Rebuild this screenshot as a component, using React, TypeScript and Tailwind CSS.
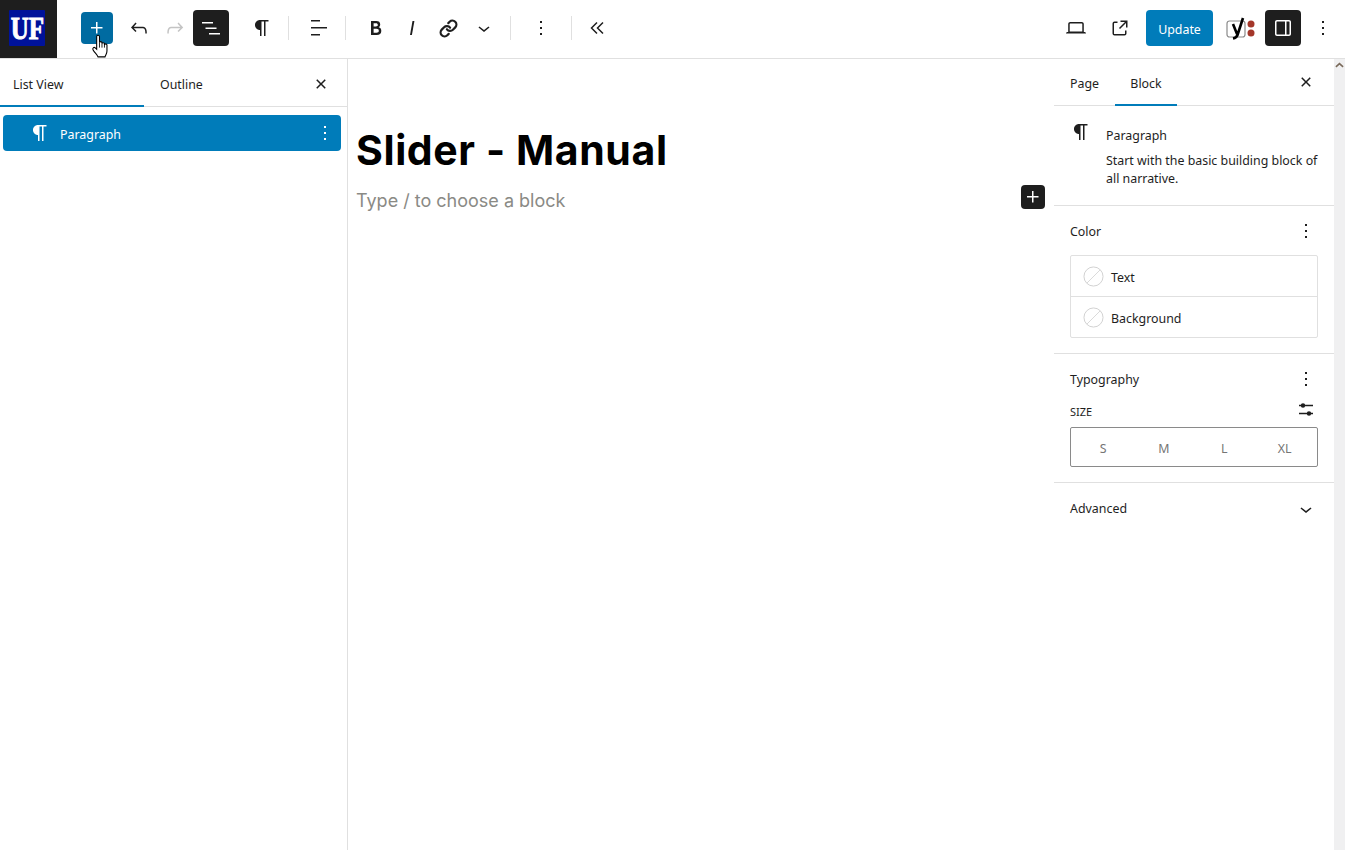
import type { ReactNode } from "react";
import { Link } from "lucide-react";

const P = {
  plus: "M11 12.5V17.5H12.5V12.5H17.5V11H12.5V6H11V11H6V12.5H11Z",
  undo: "M18.3 11.7c-.6-.6-1.4-.9-2.3-.9H6.7l2.9-3.3-1.1-1-4.5 5L8.5 16l1-1-2.7-2.7H16c.5 0 .9.2 1.3.5 1 1 1 3.4 1 4.5v.3h1.5v-.2c0-1.5 0-4.3-1.5-5.7z",
  redo: "M15.6 6.5l-1.1 1 2.9 3.3H8c-.9 0-1.7.3-2.3.9-1.4 1.5-1.4 4.2-1.4 5.6v.2h1.5v-.3c0-1.1 0-3.5 1-4.5.3-.3.7-.5 1.3-.5h9.2L14.5 15l1.1 1.1 4.6-4.6-4.6-5z",
  list: "M3 6h11v1.5H3V6Zm3.5 5.5h11V13h-11v-1.5ZM21 17H10v1.5h11V17Z",
  para: "m9.99609 14v-.2251l.00391.0001v6.225h1.5v-14.5h2.5v14.5h1.5v-14.5h3v-1.5h-8.50391c-2.76142 0-5 2.23858-5 5 0 2.7614 2.23858 5 5 5z",
  align: "M13 5.5H4V4h9v1.5Zm7 7H4V11h16v1.5Zm-7 7H4V18h9v1.5Z",
  bold: "M14.7 11.3c1-.6 1.5-1.6 1.5-3 0-2.3-1.3-3.4-4-3.4H7v14h5.8c1.4 0 2.5-.3 3.3-1 .8-.7 1.2-1.7 1.2-2.9.1-1.9-.8-3.1-2.6-3.7zm-5.1-4h2.3c.6 0 1.1.1 1.4.4.3.3.5.7.5 1.2s-.2 1-.5 1.2c-.3.3-.8.4-1.4.4H9.6V7.3zm4.6 9c-.4.3-1 .4-1.7.4H9.6v-3.9h2.9c.7 0 1.3.2 1.7.5.4.3.6.8.6 1.5s-.2 1.2-.6 1.5z",
  italic: "M12.5 5L10 19h1.9l2.5-14z",
  chevron: "M17.5 11.6L12 16l-5.5-4.4.9-1.2L12 14l4.5-3.6 1 1.2z",
  more: "M13 19h-2v-2h2v2zm0-6h-2v-2h2v2zm0-6h-2V5h2v2z",
  close: "M12 13.06l3.712 3.713 1.061-1.06L13.061 12l3.712-3.712-1.06-1.06L12 10.938 8.288 7.227l-1.061 1.06L10.939 12l-3.712 3.712 1.06 1.061L12 13.061z",
  external: "M19.5 4.5h-7V6h4.44l-5.97 5.97 1.06 1.06L18 7.06v4.44h1.5v-7Zm-13 1a2 2 0 0 0-2 2v10a2 2 0 0 0 2 2h10a2 2 0 0 0 2-2v-3H17v3a.5.5 0 0 1-.5.5h-10a.5.5 0 0 1-.5-.5v-10a.5.5 0 0 1 .5-.5h3V5.5h-3Z",
  drawer: "M18 4H6c-1.1 0-2 .9-2 2v12c0 1.1.9 2 2 2h12c1.1 0 2-.9 2-2V6c0-1.1-.9-2-2-2zm-4 14.5H6c-.3 0-.5-.2-.5-.5V6c0-.3.2-.5.5-.5h8v13zm4.5-.5c0 .3-.2.5-.5.5h-2.5v-13H18c.3 0 .5.2.5.5v12z",
  laptop: "M20.5 16h-.7V8c0-1.1-.9-2-2-2H6.2c-1.1 0-2 .9-2 2v8h-.7c-.8 0-1.5.7-1.5 1.5h20c0-.8-.7-1.5-1.5-1.5zM5.7 8c0-.3.2-.5.5-.5h11.6c.3 0 .5.2.5.5v7.6H5.7V8z",
};

function Icon({ d, className = "" }: { d: string; className?: string }) {
  return (
    <svg viewBox="0 0 24 24" className={`w-6 h-6 shrink-0 fill-current ${className}`}>
      <path d={d} />
    </svg>
  );
}

function Btn({ children, className = "" }: { children: ReactNode; className?: string }) {
  return (
    <div className={`w-9 h-9 shrink-0 flex items-center justify-center rounded-sm text-[#1e1e1e] ${className}`}>
      {children}
    </div>
  );
}

function Sep({ className = "" }: { className?: string }) {
  return <div className={`w-px h-6 shrink-0 bg-[#e0e0e0] ${className}`} />;
}

function HandCursor() {
  return (
    <svg viewBox="0 0 18 24" className="absolute left-[91px] top-[33px] w-[20px] h-[26px]">
      <path
        d="M5 12V3.2C5 1.6 7.6 1.6 7.6 3.2V9c0-1.4 2.3-1.4 2.3 0v1c0-1.4 2.3-1.4 2.3 0v1c0-1.3 2.3-1.3 2.3 0v5.5c0 2.6-1.2 3.6-1.8 5.5H6.2C5.2 19.6 3.4 18.6 1.7 15.6c-.9-1.6.7-3 2-1.8L5 15Z"
        fill="#fff"
        stroke="#000"
        strokeWidth="1"
      />
      <path d="M7.6 9v4.5M9.9 10v3.5M12.2 11v2.5" stroke="#000" strokeWidth="0.8" />
    </svg>
  );
}

function TopBar() {
  return (
    <header className="relative h-[59px] shrink-0 flex items-center pb-[2px] bg-white border-b border-[#e0e0e0]">
      <div className="w-[57px] h-[58px] shrink-0 self-start bg-[#1e1e1e] pl-[9px] pt-[10px]">
        <div className="w-9 h-9 bg-[#00129a] rounded-[1px] flex items-center justify-center overflow-hidden">
          <span className="font-['Liberation_Serif',serif] font-bold text-[32px] leading-none text-white scale-x-[0.78] [-webkit-text-stroke:1px_white]">
            UF
          </span>
        </div>
      </div>
      <div className="ml-6 w-8 h-8 shrink-0 rounded-sm bg-[#006ba1] text-white flex items-center justify-center">
        <Icon d={P.plus} />
      </div>
      <Btn className="ml-2">
        <Icon d={P.undo} />
      </Btn>
      <Btn className="text-[#c4c4c4]">
        <Icon d={P.redo} />
      </Btn>
      <Btn className="bg-[#1e1e1e] text-white">
        <Icon d={P.list} />
      </Btn>
      <Btn className="ml-[14px]">
        <Icon d={P.para} className="ml-[2px]" />
      </Btn>
      <Sep className="ml-[9px]" />
      <Btn className="ml-[12px]">
        <Icon d={P.align} />
      </Btn>
      <Sep className="ml-[8px]" />
      <Btn className="ml-[12px]">
        <Icon d={P.bold} />
      </Btn>
      <Btn>
        <Icon d={P.italic} />
      </Btn>
      <Btn>
        <Link className="w-[19px] h-[19px]" strokeWidth={2.8} />
      </Btn>
      <Btn>
        <Icon d={P.chevron} />
      </Btn>
      <Sep className="ml-[8px]" />
      <Btn className="ml-[12px]">
        <Icon d={P.more} />
      </Btn>
      <Sep className="ml-[12px]" />
      <Btn className="ml-[7px]">
        <svg viewBox="0 0 24 24" className="w-6 h-6 fill-none stroke-current" strokeWidth="1.5">
          <path d="M12 6.500 6.500 12l5.500 5.500M18 6.500 12.500 12l5.500 5.500" />
        </svg>
      </Btn>
      <div className="ml-auto flex items-center">
        <Btn>
          <Icon d={P.laptop} />
        </Btn>
        <Btn className="ml-2">
          <Icon d={P.external} />
        </Btn>
        <div className="ml-2 w-[67px] h-9 pt-1 rounded-sm bg-[#007cba] text-white flex items-center justify-center">
          Update
        </div>
        <div className="ml-[13px] w-[32px] h-9 flex items-center justify-center">
          <svg viewBox="0 0 32 24" className="w-[32px] h-6">
            <rect x="1" y="5" width="18" height="16" rx="2.500" fill="none" stroke="#8a8a8a" strokeWidth="1.200" />
            <path d="M7 8 11 18M17 2 11.500 19c-.6 1.800-2 3-4.500 3.500" fill="none" stroke="#000" strokeWidth="2.600" />
            <circle cx="25" cy="8" r="3.500" fill="#a4372a" />
            <circle cx="25" cy="17" r="3.500" fill="#a4372a" />
          </svg>
        </div>
        <Btn className="ml-[7px] bg-[#1e1e1e] text-white">
          <Icon d={P.drawer} />
        </Btn>
        <Btn className="ml-1 mr-1">
          <Icon d={P.more} />
        </Btn>
      </div>
      <HandCursor />
    </header>
  );
}

function ListPanel() {
  return (
    <aside className="w-[348px] shrink-0 border-r border-[#e0e0e0] bg-white">
      <div className="relative h-[48px] flex border-b border-[#e0e0e0]">
        <div className="w-[144px] h-[48px] pl-[13px] pt-[7px] flex items-center border-b-2 border-[#007cba] text-[#1e1e1e]">List View</div>
        <div className="pl-4 pt-[5px] flex items-center text-[#1e1e1e]">Outline</div>
        <Icon d={P.close} className="absolute left-[309px] top-[13px] text-[#1e1e1e]" />
      </div>
      <div className="mx-[3px] mt-2 mr-[6px] h-9 rounded-sm bg-[#007cba] text-white flex items-center">
        <Icon d={P.para} className="ml-[25px]" />
        <span className="ml-2 pt-1">Paragraph</span>
        <Icon d={P.more} className="ml-auto mr-1" />
      </div>
    </aside>
  );
}

function Editor() {
  return (
    <main className="relative flex-1 bg-white pl-2 pt-[66px]">
      <h1 className="font-['Inter',sans-serif] font-bold text-[41px] leading-[50px] tracking-[0.6px] text-black">Slider - Manual</h1>
      <p className="mt-[11px] font-['Inter',sans-serif] text-[18px] leading-[30px] text-[#8a8a85]">Type / to choose a block</p>
      <div className="absolute left-[673px] top-[126px] w-6 h-6 rounded-sm bg-[#1e1e1e] text-white flex items-center justify-center">
        <Icon d={P.plus} />
      </div>
    </main>
  );
}

function NoColor() {
  return (
    <svg viewBox="0 0 22 22" className="w-[21px] h-[21px] shrink-0">
      <circle cx="11" cy="11" r="10" fill="#fff" stroke="#d0d0d0" />
      <path d="M4 18 18 4" stroke="#d8d8d8" />
    </svg>
  );
}

function Sidebar() {
  return (
    <aside className="w-[281px] shrink-0 border-l border-[#e0e0e0] bg-white text-[#1e1e1e] -ml-px">
      <div className="relative h-[47px] flex border-b border-[#e0e0e0]">
        <div className="pl-4 w-[61px] h-[47px] pt-1 flex items-center">Page</div>
        <div className="w-[62px] h-[47px] pt-[5px] flex items-center justify-center border-b-2 border-[#007cba]">Block</div>
        <Icon d={P.close} className="absolute left-[240px] top-[11px]" />
      </div>
      <section className="h-[100px] flex border-b border-[#e0e0e0] pl-4 pt-[16px]">
        <Icon d={P.para} className="-ml-[1px] -mt-[2px]" />
        <div className="ml-[13px] w-[214px] pt-1">
          <div className="leading-[20px]">Paragraph</div>
          <p className="mt-[6px] leading-[18px]">Start with the basic building block of all narrative.</p>
        </div>
      </section>
      <section className="h-[148px] border-b border-[#e0e0e0] px-4 pt-[13px]">
        <div className="flex items-center justify-between h-6">
          <span className="pt-[3px]">Color</span>
          <Icon d={P.more} />
        </div>
        <div className="mt-[12px] w-[248px] border border-[#e0e0e0] rounded-[2px]">
          <div className="h-[41px] flex items-center pl-3 gap-[7px] border-b border-[#e0e0e0]">
            <NoColor />
            <span className="pt-1">Text</span>
          </div>
          <div className="h-[40px] flex items-center pl-3 gap-[7px]">
            <NoColor />
            <span className="pt-1">Background</span>
          </div>
        </div>
      </section>
      <section className="h-[129px] border-b border-[#e0e0e0] px-4 pt-[13px]">
        <div className="flex items-center justify-between h-6">
          <span className="pt-[3px]">Typography</span>
          <Icon d={P.more} />
        </div>
        <div className="mt-[11px] h-5 flex items-center justify-between">
          <span className="text-[11px] uppercase pt-[1px]">Size</span>
          <svg viewBox="0 0 24 24" className="w-6 h-6 -mt-[4px]">
            <path d="M5 7.500h14M5 15.500h14" stroke="#1e1e1e" strokeWidth="1.500" />
            <circle cx="9" cy="7.500" r="2.200" fill="#1e1e1e" />
            <circle cx="15" cy="15.500" r="2.200" fill="#1e1e1e" />
          </svg>
        </div>
        <div className="mt-[5px] w-[248px] h-10 border border-[#8a8a8a] rounded-[2px] px-[2px] pt-[5px] grid grid-cols-4 items-center text-center text-[#757575]">
          <span>S</span>
          <span>M</span>
          <span>L</span>
          <span>XL</span>
        </div>
      </section>
      <section className="h-[52px] px-4 flex items-center justify-between">
        <span className="pt-[1px]">Advanced</span>
        <Icon d={P.chevron} />
      </section>
    </aside>
  );
}

export default function App() {
  return (
    <div className="w-[1345px] h-[850px] overflow-hidden flex flex-col bg-white font-['Noto_Sans',sans-serif] text-[12.4px]">
      <TopBar />
      <div className="flex flex-1 min-h-0">
        <ListPanel />
        <Editor />
        <Sidebar />
        <div className="w-[11px] shrink-0 bg-[#f0f0f1] flex justify-center pt-[3px]">
          <svg viewBox="0 0 10 6" className="w-[9px] h-[6px]">
            <path d="M1 5 5 1.500 9 5" fill="none" stroke="#7a6a5a" strokeWidth="1.800" />
          </svg>
        </div>
      </div>
    </div>
  );
}
